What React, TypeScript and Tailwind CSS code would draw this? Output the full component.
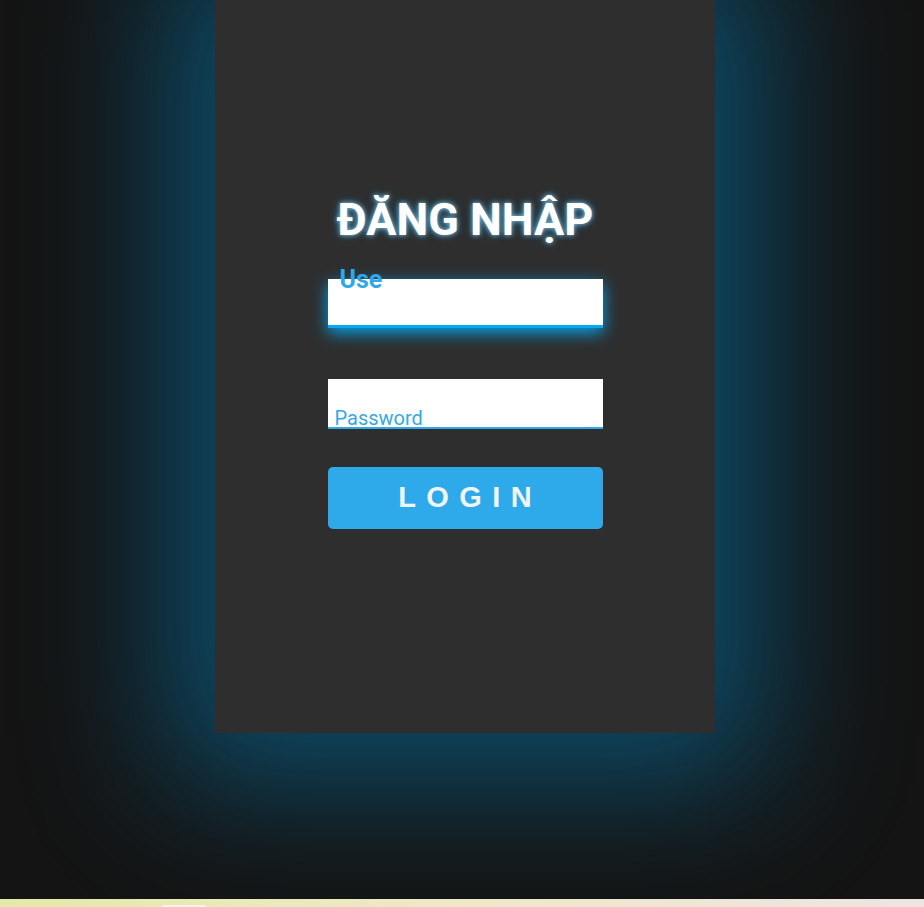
import React from "react";

export default function App() {
  return (
    <div className="w-full min-h-[907px] flex flex-col bg-gradient-to-r from-[#e2eaa8] via-[#eee8c8] to-[#eee4e2]">
      <div className="h-[899px] bg-[#141414] flex justify-center pl-[6px] overflow-hidden">
        <div className="w-[500px] h-[733px] bg-[#2e2e2e] shadow-[0_0_130px_50px_rgba(3,169,244,0.38)] flex flex-col items-center pt-[193px]">
          <h1
            className="text-[45px] leading-[54px] font-bold text-white [text-shadow:0_0_5px_rgba(160,220,255,0.9),0_0_10px_rgba(3,169,244,0.45)]"
            style={{ fontFamily: "Roboto, 'Noto Sans', sans-serif" }}
          >
            ĐĂNG NHẬP
          </h1>
          <div className="relative mt-[32px] w-[275px] h-[49px] bg-white border-b-[3px] border-[#03a9f4] shadow-[0_5px_16px_rgba(3,169,244,0.95)]">
            <span
              className="absolute left-[12px] top-[-14px] text-[25px] leading-[30px] font-bold text-[#2ea8ea]"
              style={{ fontFamily: "Roboto, 'Noto Sans', sans-serif" }}
            >
              Use
            </span>
          </div>
          <div className="relative mt-[51px] w-[275px] h-[50px] bg-white border-b-[2px] border-[#2ea8e8]">
            <span
              className="absolute left-[7px] bottom-[-3px] text-[20px] leading-[24px] text-[#35a8e8]"
              style={{ fontFamily: "Roboto, 'Noto Sans', sans-serif" }}
            >
              Password
            </span>
          </div>
          <button
            className="mt-[38px] w-[275px] h-[62px] rounded-[5px] bg-[#2ea9ea] text-[#eef6fc] text-[29px] font-bold tracking-[0.36em] pl-[0.36em] flex items-center justify-center"
            style={{ fontFamily: "'Liberation Sans', Arial, sans-serif" }}
          >
            LOGIN
          </button>
        </div>
      </div>
      <div className="h-[8px] relative">
        <div className="absolute left-[161px] top-[6px] w-[46px] h-[4px] rounded-t-[3px] bg-[#f4f4e0]" />
      </div>
    </div>
  );
}
